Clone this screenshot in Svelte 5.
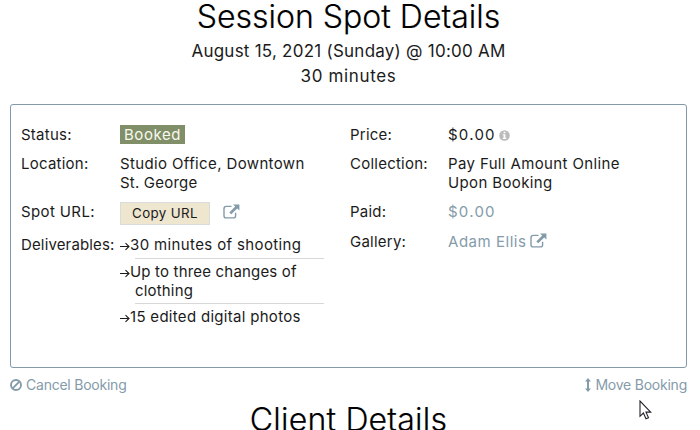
<script>
  const deliverables = [
    { lines: ['30 minutes of shooting'], kind: 'wide' },
    { lines: ['Up to three changes of', 'clothing'], kind: 'tight' },
    { lines: ['15 edited digital photos'], kind: 'wide' }
  ];
</script>

{#snippet external()}
  <svg class="ext" width="17" height="15" viewBox="0 0 17 15" aria-hidden="true">
    <path d="M8.5 2.4H3.2Q1 2.4 1 4.6V11.7Q1 13.9 3.2 13.9H10.4Q12.6 13.9 12.6 11.7V8.7" fill="none" stroke="currentColor" stroke-width="1.4" />
    <path d="M10 .4H16.4V6.6L14.2 4.6L8.2 10.2L6.3 8.4L12.2 2.5Z" fill="currentColor" />
  </svg>
{/snippet}

<main>
  <h1 class="session">Session Spot Details</h1>
  <p class="date">August 15, 2021 (Sunday) @ 10:00 AM</p>
  <p class="duration">30 minutes</p>

  <section class="card">
    <dl class="left">
      <dt>Status:</dt>
      <dd><span class="badge">Booked</span></dd>
      <dt>Location:</dt>
      <dd>Studio Office, Downtown<br /><span class="george">St. George</span></dd>
      <dt class="url-label">Spot URL:</dt>
      <dd class="url"><button>Copy URL</button><a href="#spot" aria-label="Open spot">{@render external()}</a></dd>
      <dt class="deliver-label">Deliverables:</dt>
      <dd>
        <ul>
          {#each deliverables as item}
            <li class={item.kind}>
              <svg width="10" height="9" viewBox="0 0 10 9" aria-hidden="true"><path d="M0 4.5H9M5.5 1.2L9 4.5L5.5 7.8" fill="none" stroke="currentColor" stroke-width="1.1" /></svg>{#each item.lines as line, i}{#if i}<br />{/if}{line}{/each}
            </li>
          {/each}
        </ul>
      </dd>
    </dl>
    <dl class="right">
      <dt>Price:</dt>
      <dd><span class="amount">$0.00</span><svg class="info" width="11" height="11" viewBox="0 0 11 11" aria-hidden="true"><circle cx="5.5" cy="5.5" r="5.3" fill="#bbb" /><path d="M4.6 1.8H6.4V3.3H4.6ZM3.8 4.3H6.4V7.8H7.2V8.9H3.8V7.8H4.6V5.3H3.8Z" fill="#fff" /></svg></dd>
      <dt>Collection:</dt>
      <dd>Pay Full Amount Online<br />Upon Booking</dd>
      <dt>Paid:</dt>
      <dd class="muted"><span class="amount">$0.00</span></dd>
      <dt class="gallery-label">Gallery:</dt>
      <dd class="gallery"><a href="#gallery">Adam Ellis{@render external()}</a></dd>
    </dl>
  </section>

  <nav>
    <a href="#cancel"><svg width="12" height="12" viewBox="0 0 12 12" aria-hidden="true"><g fill="none" stroke="currentColor" stroke-width="1.9"><circle cx="6" cy="6" r="5" /><path d="M2.6 9.4L9.4 2.6" /></g></svg><span>Cancel Booking</span></a>
    <a href="#move"><svg width="6" height="14" viewBox="0 0 6 14" aria-hidden="true"><path d="M3 0L6 3.5H4V10.5H6L3 14L0 10.5H2V3.5H0Z" fill="currentColor" /></svg><span>Move Booking</span></a>
  </nav>

  <h1 class="client">Client Details</h1>

  <svg class="pointer" width="13" height="20" viewBox="0 0 13 20" aria-hidden="true">
    <path d="M1 1V16.3L4.4 13L7 18.8L9.5 17.7L7 12.1H11.7Z" fill="#fff" stroke="#22222c" stroke-width="1.1" />
  </svg>
</main>

<style>
  :global(body) {
    margin: 0;
    background: #fff;
    overflow: hidden;
  }
  main {
    position: relative;
    box-sizing: border-box;
    width: 700px;
    height: 430px;
    overflow: hidden;
    padding: 1px 13px 0 10px;
    font: 400 15px/19px Inter, 'Liberation Sans', sans-serif;
    color: #1b1b1b;
    white-space: nowrap;
  }
  h1, p {
    margin: 0;
    text-align: center;
  }
  h1 {
    font-size: 32px;
    line-height: 32px;
    font-weight: 350;
    color: #000;
    -webkit-text-stroke: 0.2px #000;
  }
  p {
    font-size: 17px;
    line-height: 25px;
  }
  .date {
    margin-top: 6px;
    letter-spacing: 0.24px;
  }
  .duration {
    letter-spacing: 0.65px;
  }
  .card {
    box-sizing: border-box;
    display: flex;
    height: 264px;
    margin-top: 15px;
    padding: 20px 10px;
    border: 1px solid #8499a8;
    border-radius: 3px;
  }
  dl {
    display: grid;
    align-content: start;
    row-gap: 10px;
    margin: 0;
  }
  .left {
    width: 329px;
    grid-template-columns: 99px 204px;
  }
  .right {
    grid-template-columns: 98px auto;
  }
  dt {
    letter-spacing: 0.24px;
  }
  .url-label {
    letter-spacing: 0.38px;
  }
  .deliver-label {
    letter-spacing: 0.15px;
  }
  dd {
    margin: 0;
    letter-spacing: 0.37px;
  }
  a {
    color: #849baa;
    text-decoration: none;
  }
  .george {
    letter-spacing: 0.2px;
  }
  .amount {
    letter-spacing: 1.25px;
  }
  .badge {
    display: block;
    box-sizing: border-box;
    width: 65px;
    height: 19px;
    text-align: center;
    letter-spacing: 0.6px;
    color: #f8f9ef;
    background: #818f68;
  }
  .url {
    display: flex;
    height: 23px;
  }
  button {
    box-sizing: border-box;
    width: 90px;
    height: 23px;
    margin: 0 13px 0 0;
    padding: 0;
    border: 1px solid #d8dcdb;
    background: #eee6cf;
    color: #1b1b1b;
    font: 400 13.3px/21px Inter, 'Liberation Sans', sans-serif;
    letter-spacing: 0.4px;
  }
  .url .ext {
    display: block;
    margin-top: 2px;
  }
  ul {
    list-style: none;
    margin: 0;
    padding: 0 0 0 15px;
  }
  li {
    padding: 3px 0 4px;
    text-indent: -15px;
    border-bottom: 1px solid #d8d8d8;
  }
  li.tight {
    padding-bottom: 3px;
    letter-spacing: 0.18px;
  }
  li:first-child {
    padding-top: 0;
  }
  li:last-child {
    border: 0;
    letter-spacing: 0.3px;
  }
  li svg {
    vertical-align: -1px;
  }
  .info {
    margin-left: 3px;
    vertical-align: -1px;
  }
  .muted {
    color: #849baa;
  }
  .gallery .ext {
    margin-left: 4px;
    vertical-align: -1px;
  }
  .gallery-label,
  .gallery {
    height: 19px;
    padding-top: 1px;
  }
  .gallery {
    letter-spacing: 0.53px;
  }
  nav {
    display: flex;
    justify-content: space-between;
    margin-top: 7px;
    font-size: 14px;
    letter-spacing: -0.23px;
  }
  nav a {
    display: flex;
    align-items: center;
    gap: 4px;
  }
  .client {
    margin-top: 10px;
    letter-spacing: 0.2px;
  }
  .pointer {
    position: absolute;
    left: 639px;
    top: 400px;
  }
</style>
